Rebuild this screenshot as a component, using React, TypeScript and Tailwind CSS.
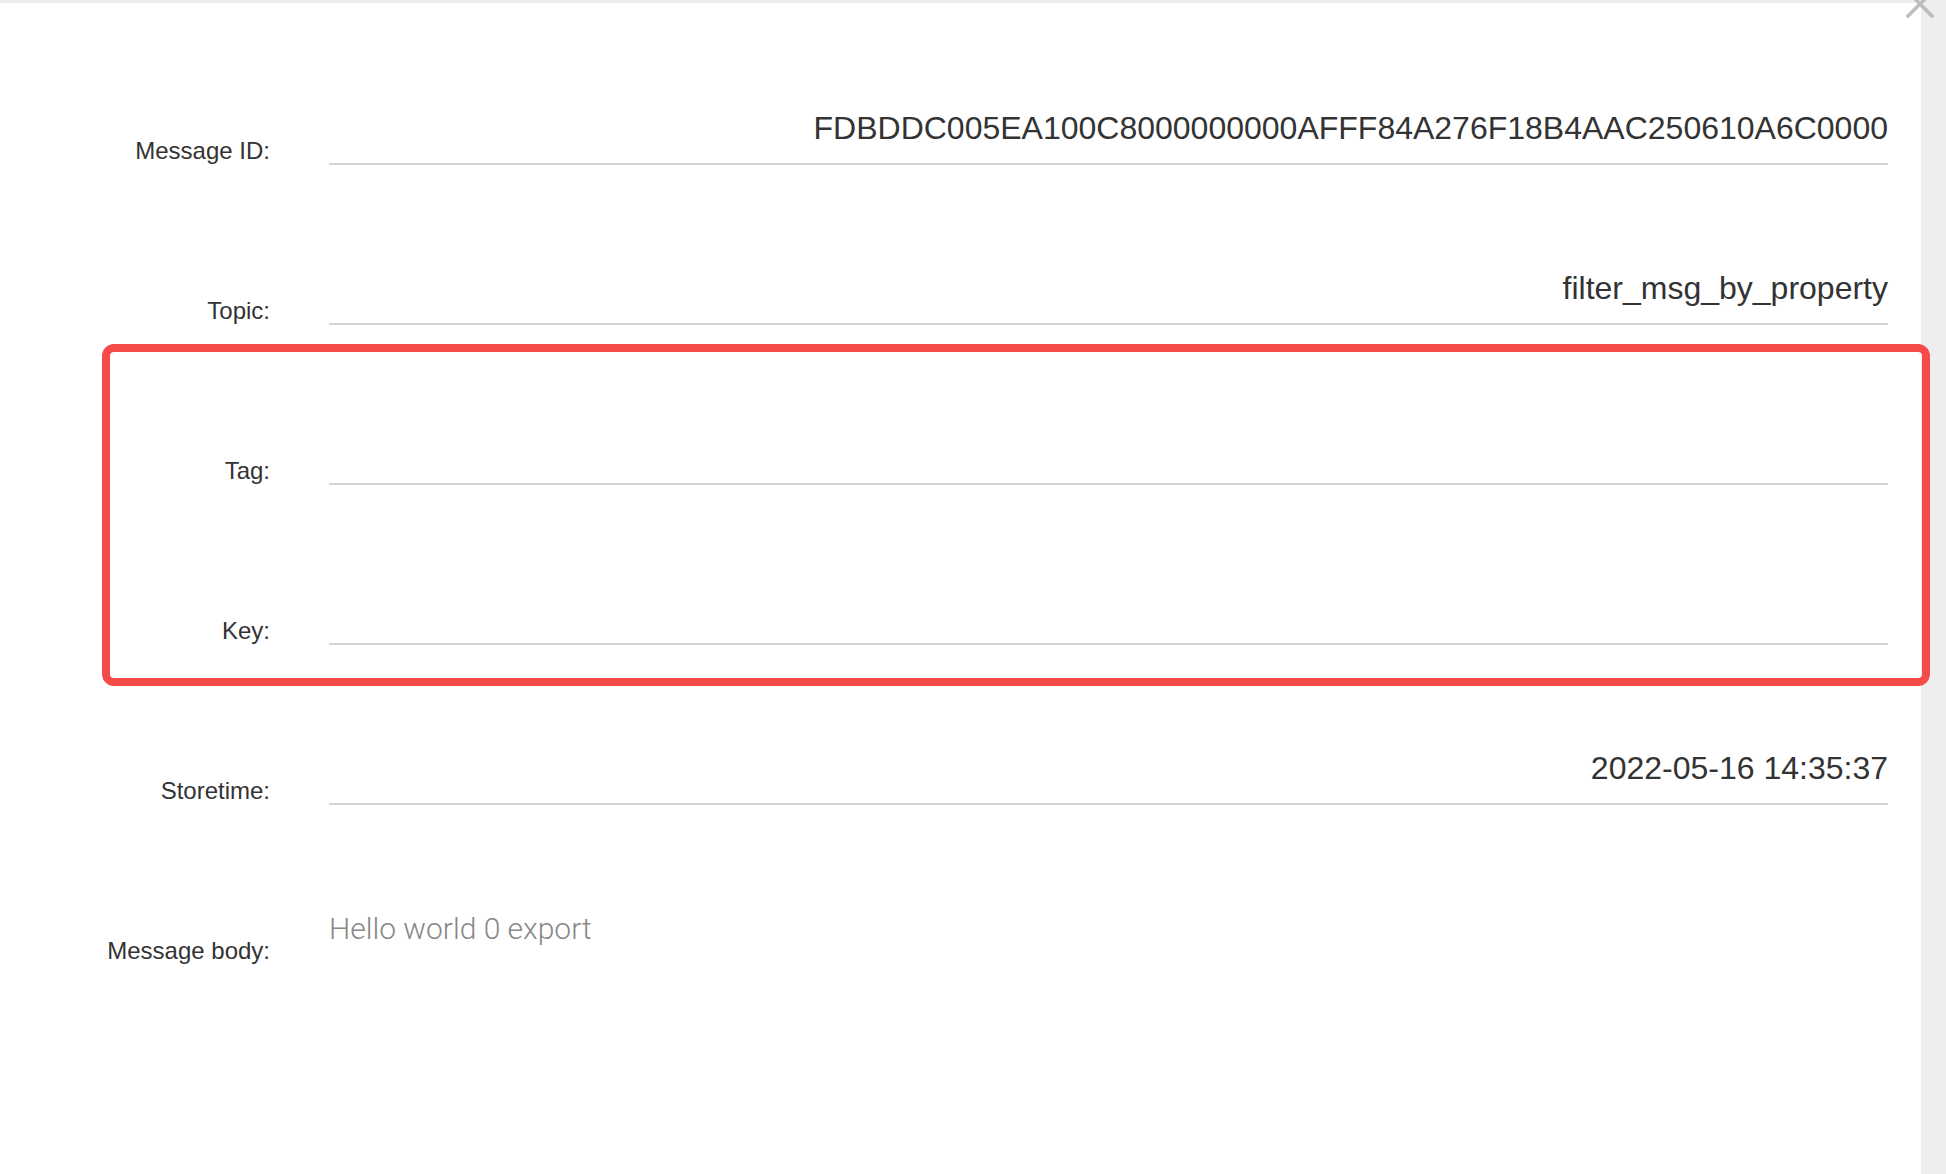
import type { ReactElement } from "react";

interface Field {
  label: string;
  value: string;
}

// ── data ──────────────────────────────────────────────────────────────────────

const FIELDS: Field[] = [
  { label: "Message ID:", value: "FDBDDC005EA100C8000000000AFFF84A276F18B4AAC250610A6C0000" },
  { label: "Topic:", value: "filter_msg_by_property" },
  { label: "Tag:", value: "" },
  { label: "Key:", value: "" },
  { label: "Storetime:", value: "2022-05-16 14:35:37" },
];

const BODY = "Hello world 0 export";

// ── parts ─────────────────────────────────────────────────────────────────────

function FieldRow({ label, value }: Field): ReactElement {
  return (
    <div className="flex h-[160px] items-end">
      <div className="mb-[2px] w-[270px] shrink-0 text-right text-[24px] leading-none text-[#333]">
        {label}
      </div>
      <div className="ml-[59px] mr-[33px] flex-1 border-b-2 border-[#d4d4d4] pb-[19px] text-right text-[32px] leading-none text-[#333]">
        {value === "" ? "\u00a0" : value}
      </div>
    </div>
  );
}

function CloseIcon(): ReactElement {
  return (
    <svg
      width={28}
      height={28}
      viewBox="0 0 28 28"
      className="absolute left-[1906px] top-[-10px]"
    >
      <path
        d="M2 2 L26 26 M26 2 L2 26"
        stroke="#bdbdbd"
        strokeWidth={3.5}
        strokeLinecap="square"
      />
    </svg>
  );
}

// ── page ──────────────────────────────────────────────────────────────────────

export default function App(): ReactElement {
  return (
    <div
      className="relative flex h-[1174px] w-[1946px] overflow-hidden bg-[#eeeeee] pt-[3px]"
      style={{ fontFamily: '"Liberation Sans", Arial, sans-serif' }}
    >
      <div className="flex w-[1921px] flex-col bg-white pt-[2px]">
        {FIELDS.map((f) => (
          <FieldRow key={f.label} label={f.label} value={f.value} />
        ))}

        {/* Message body */}
        <div className="flex h-[160px] items-end">
          <div className="mb-[2px] w-[270px] shrink-0 text-right text-[24px] leading-none text-[#333]">
            Message body:
          </div>
          <div
            className="ml-[59px] mr-[33px] flex-1 pb-[21px] text-[30px] font-light leading-none text-[#888]"
            style={{ fontFamily: '"Roboto", "Liberation Sans", sans-serif' }}
          >
            {BODY}
          </div>
        </div>
      </div>

      {/* Highlight box over Tag / Key */}
      <div className="pointer-events-none absolute left-[102px] top-[344px] h-[342px] w-[1828px] rounded-[12px] border-[8px] border-[#f64b49]" />

      <CloseIcon />
    </div>
  );
}
